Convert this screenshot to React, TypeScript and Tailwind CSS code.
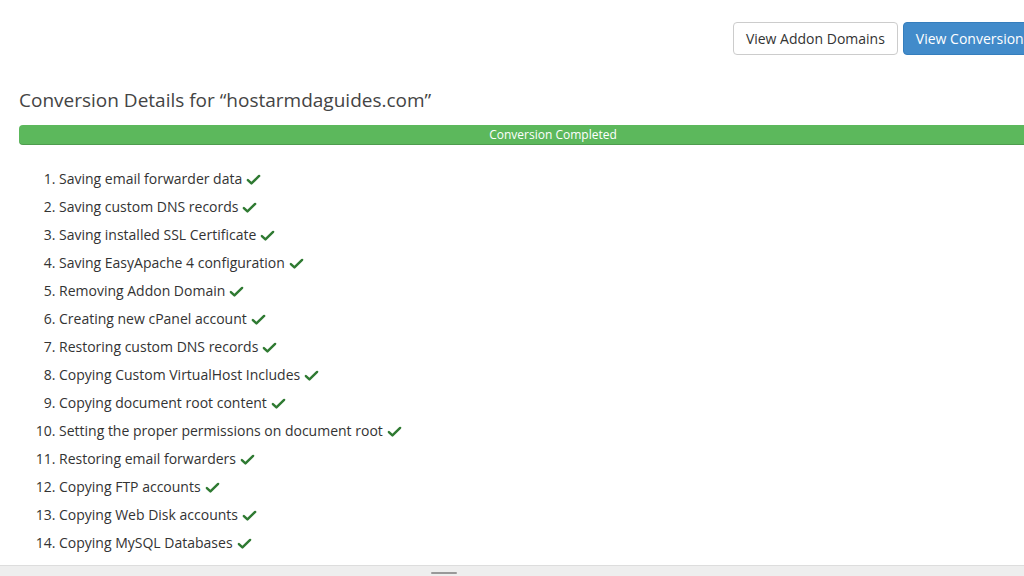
const steps = [
  'Saving email forwarder data',
  'Saving custom DNS records',
  'Saving installed SSL Certificate',
  'Saving EasyApache 4 configuration',
  'Removing Addon Domain',
  'Creating new cPanel account',
  'Restoring custom DNS records',
  'Copying Custom VirtualHost Includes',
  'Copying document root content',
  'Setting the proper permissions on document root',
  'Restoring email forwarders',
  'Copying FTP accounts',
  'Copying Web Disk accounts',
  'Copying MySQL Databases',
]

function CheckIcon() {
  return (
    <svg viewBox="0 0 16 16" className="inline-block w-[15px] h-[15px] ml-[4px] -mt-[2px] align-middle text-[#2f7a32]">
      <path d="M2 8.6 L5.8 12.2 L14 4.2" fill="none" stroke="currentColor" strokeWidth="2.6" strokeLinecap="round" strokeLinejoin="round" />
    </svg>
  )
}

export default function App() {
  return (
    <div className="w-[1024px] h-[576px] overflow-hidden bg-white flex flex-col font-['Open_Sans',sans-serif] text-[#333]">
      <div className="flex-1 min-h-0 overflow-hidden">
        <div className="w-[1068px] ml-[19px] pt-[22px]">
          <div className="flex justify-end gap-[5px]">
            <button className="h-[33px] px-[12px] border border-[#cccccc] rounded-[4px] bg-white text-[14px] text-[#333]">
              View Addon Domains
            </button>
            <button className="h-[33px] px-[12px] border border-[#357ebd] rounded-[4px] bg-[#428bca] text-[14px] text-white">
              View Conversion History
            </button>
          </div>
          <h2 className="mt-[32px] text-[19px] leading-[26px] text-[#444]">
            Conversion Details for “hostarmdaguides.com”
          </h2>
          <div className="mt-[12px] h-[20px] rounded-[4px] bg-[#5cb85c] shadow-[inset_0_-1px_0_rgba(0,0,0,0.15)] flex items-center justify-center text-[12px] text-white">
            Conversion Completed
          </div>
          <ol className="list-decimal pl-[40px] mt-[20px] text-[14px] leading-[20px]">
            {steps.map((s) => (
              <li key={s} className="py-[4px]">
                {s}
                <CheckIcon />
              </li>
            ))}
          </ol>
        </div>
      </div>
      <div className="h-[11px] shrink-0 bg-[#eeeeee] border-t border-[#dddddd] relative">
        <div className="absolute left-[431px] bottom-[2px] w-[26px] h-[2px] rounded-[1px] bg-[#999]" />
      </div>
    </div>
  )
}
